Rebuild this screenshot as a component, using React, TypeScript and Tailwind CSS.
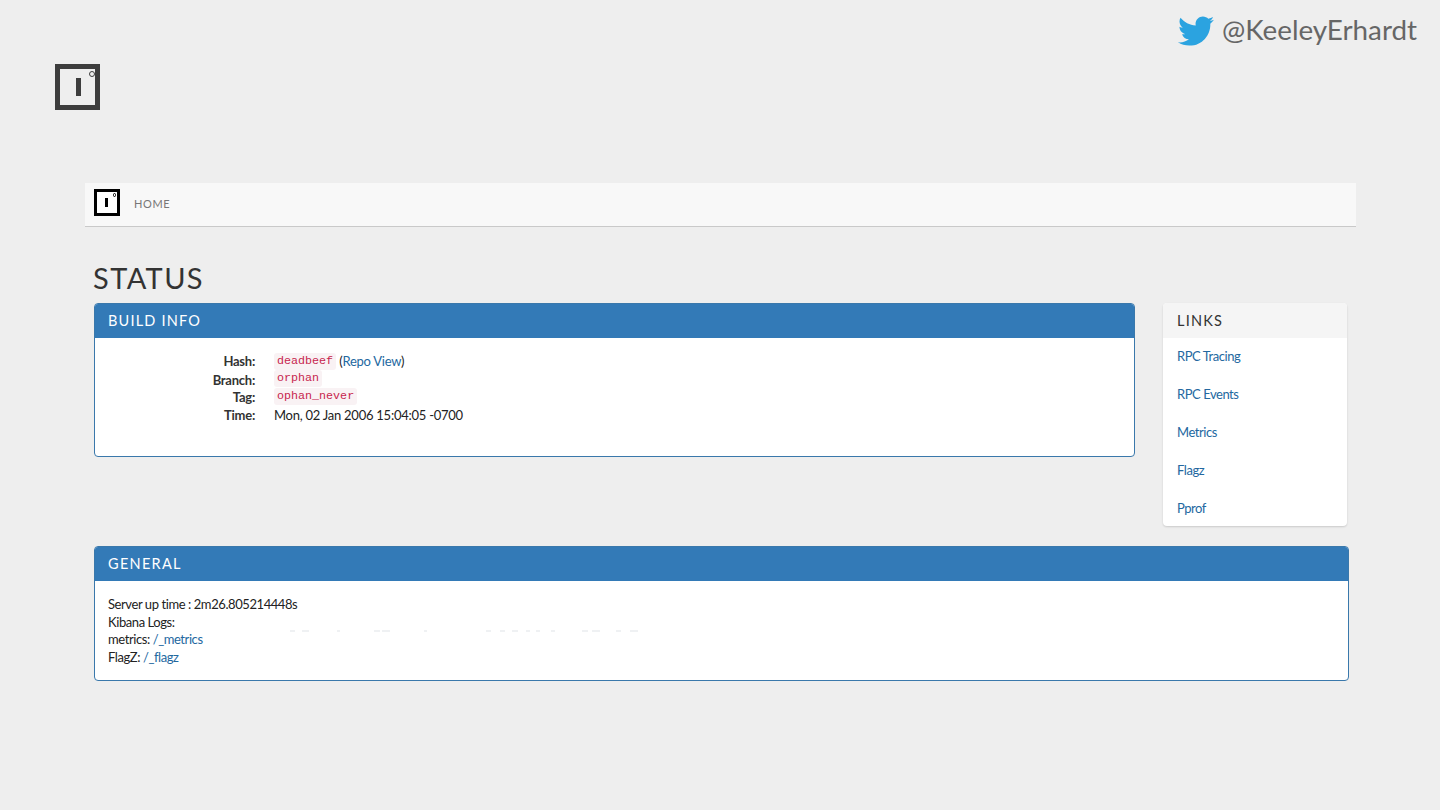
import { FaTwitter } from 'react-icons/fa';

const LINKS = ['RPC Tracing', 'RPC Events', 'Metrics', 'Flagz', 'Pprof'];

function Logo({ className, barClass, dotClass }: { className: string; barClass: string; dotClass: string }) {
  return (
    <div className={`relative ${className}`}>
      <div className={`absolute ${barClass}`} />
      <div className={`absolute rounded-full ${dotClass}`} />
    </div>
  );
}

function Code({ children, className = '' }: { children: string; className?: string }) {
  return (
    <code
      className={`inline-block h-[17px] rounded-[3px] bg-[#f9f2f4] px-[3px] align-top text-[11.7px] leading-[16px] tracking-normal text-[#c7254e] font-['Liberation_Mono',monospace] ${className}`}
    >
      {children}
    </code>
  );
}

function InfoRow({ label, children, h }: { label: string; children: React.ReactNode; h: string }) {
  return (
    <div className={`flex ${h}`}>
      <div className="w-[160px] shrink-0 text-right font-bold text-[#333]">{label}:</div>
      <div className="ml-[19px]">{children}</div>
    </div>
  );
}

export default function App() {
  return (
    <div className="h-[810px] w-[1440px] overflow-hidden bg-[#eeeeee] font-['Lato',sans-serif]">
      <div className="flex h-[64px] items-start justify-end pr-[23px] pt-[13px]">
        <FaTwitter className="h-[36px] w-[36px] text-[#2ba3e0]" />
        <span className="-mt-px ml-[8px] text-[27.8px] leading-[36px] text-[#666666]">@KeeleyErhardt</span>
      </div>

      <div className="ml-[55px]">
        <Logo
          className="h-[46px] w-[45px] border-[5px] border-[#3d3d3d]"
          barClass="left-[16px] top-[9px] h-[18px] w-[5px] bg-[#3d3d3d]"
          dotClass="right-[0.5px] top-[1.5px] h-[6px] w-[6px] border-[1.5px] border-[#3d3d3d]"
        />
      </div>

      <div className="ml-[85px] mt-[73px] w-[1271px]">
        <nav className="flex h-[44px] border-b border-[#c9c9c9] bg-[#f8f8f8] pl-[9px] pt-[6px]">
          <Logo
            className="h-[27px] w-[26px] border-[3px] border-black bg-white"
            barClass="left-[8px] top-[6px] h-[9px] w-[3px] bg-black"
            dotClass="right-[1px] top-[1px] h-[3.5px] w-[3.5px] border-[0.75px] border-black"
          />
          <span className="ml-[14px] mt-[7px] text-[11px] leading-[15px] tracking-[0.6px] text-[#777]">HOME</span>
        </nav>

        <div className="pl-[8px]">
          <h1 className="mt-[34px] text-[29px] leading-[34px] tracking-[1.4px] text-[#333]">STATUS</h1>

          <div className="ml-[1px] mt-[8px] flex items-start">
            <section className="h-[154px] w-[1041px] overflow-hidden rounded-[4px] border border-[#3a78ab] bg-white">
              <h2 className="flex h-[34px] items-center bg-[#337ab7] pl-[13px] text-[14.5px] tracking-[1.2px] text-white">
                BUILD INFO
              </h2>
              <div className="pt-[14px] text-[13px] leading-[18px] tracking-[-0.25px] text-[#222]">
                <InfoRow label="Hash" h="h-[19px]">
                  <Code className="mt-px">deadbeef</Code> (<a className="text-[#23689f]">Repo View</a>)
                </InfoRow>
                <InfoRow label="Branch" h="h-[17px]">
                  <Code className="-mt-px">orphan</Code>
                </InfoRow>
                <InfoRow label="Tag" h="h-[18px]">
                  <Code>ophan_never</Code>
                </InfoRow>
                <InfoRow label="Time" h="h-[18px]">
                  <span>Mon, 02 Jan 2006 15:04:05 -0700</span>
                </InfoRow>
              </div>
            </section>

            <aside className="ml-[28px] w-[184px] overflow-hidden rounded-[4px] bg-white shadow-[0_1px_2px_rgba(0,0,0,0.15)]">
              <h2 className="flex h-[35px] items-center bg-[#f5f5f5] pl-[14px] text-[14.5px] tracking-[1.2px] text-[#333]">
                LINKS
              </h2>
              <ul>
                {LINKS.map((l) => (
                  <li
                    key={l}
                    className="h-[38px] pl-[14px] pt-[9px] text-[13px] leading-[18px] tracking-[-0.45px] text-[#23689f] last:h-[36px]"
                  >
                    {l}
                  </li>
                ))}
              </ul>
            </aside>
          </div>

          <section className="ml-[1px] mt-[20px] h-[135px] w-[1255px] overflow-hidden rounded-[4px] border border-[#3a78ab] bg-white">
            <h2 className="flex h-[34px] items-center bg-[#337ab7] pl-[13px] text-[14.5px] tracking-[1.3px] text-white">
              GENERAL
            </h2>
            <div className="pl-[13px] pt-[15px] text-[13px] leading-[17.6px] tracking-[-0.42px] text-[#222]">
              <div>Server up time : 2m26.805214448s</div>
              <div className="relative">
                Kibana Logs:
                <svg className="absolute left-[48px] top-[16px]" width="490" height="3" viewBox="0 0 490 3">
                  <path d="M134 1h5M146 1h7M181 1h3M218 1h6M226 1h8M268 1h3M330 1h5M344 1h5M356 1h6M370 1h4M380 1h4M395 1h4M426 1h6M436 1h8M460 1h5M474 1h8" stroke="#dfe3e7" strokeWidth="1" />
                </svg>
              </div>
              <div>
                metrics: <a className="text-[#23689f]">/_metrics</a>
              </div>
              <div>
                FlagZ: <a className="text-[#23689f]">/_flagz</a>
              </div>
            </div>
          </section>
        </div>
      </div>
    </div>
  );
}
